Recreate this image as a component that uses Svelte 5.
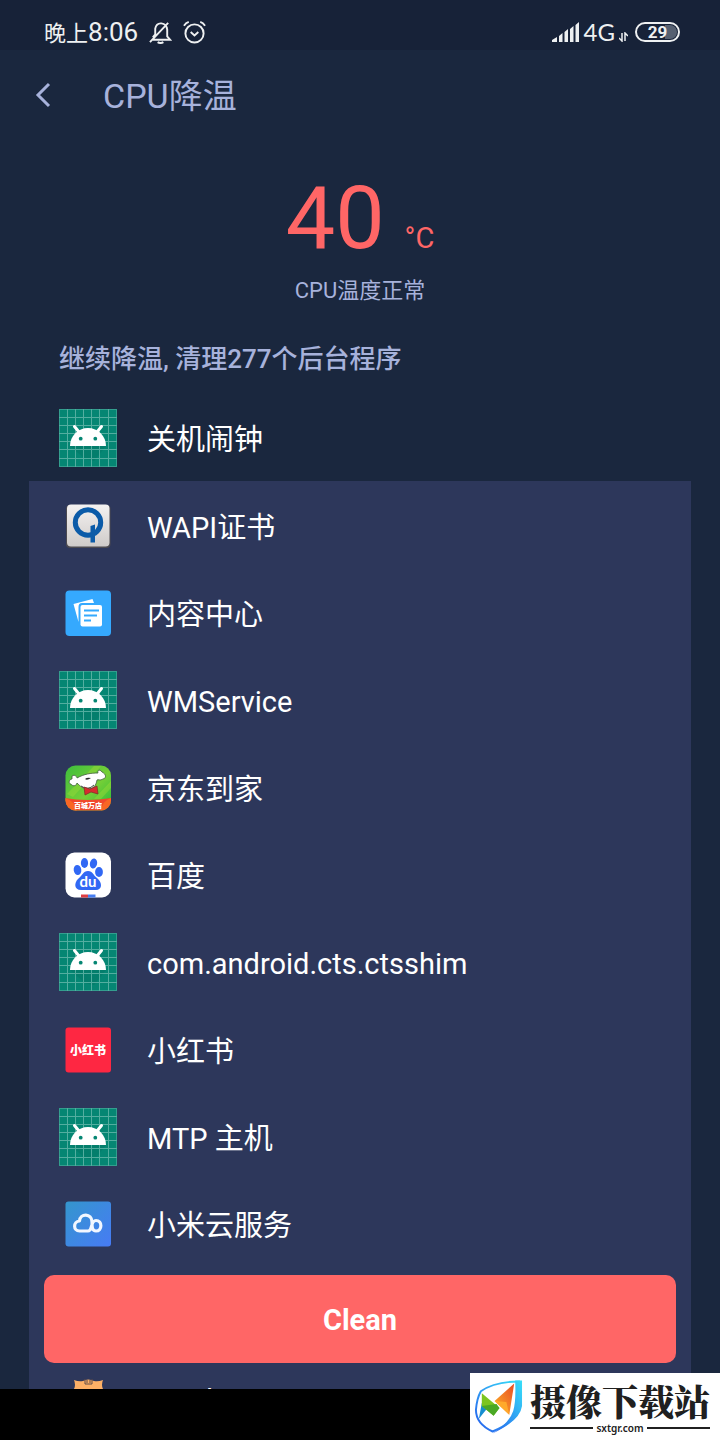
<script lang="ts">
  interface App {
    name: string;
    icon: string;
  }

  const title = 'CPU降温';
  const temperature = 40;
  const processCount = 277;
  const battery = 29;

  const apps: App[] = [
    { name: 'WAPI证书', icon: 'wapi' },
    { name: '内容中心', icon: 'content' },
    { name: 'WMService', icon: 'android' },
    { name: '京东到家', icon: 'jd' },
    { name: '百度', icon: 'baidu' },
    { name: 'com.android.cts.ctsshim', icon: 'android' },
    { name: '小红书', icon: 'red' },
    { name: 'MTP 主机', icon: 'android' },
    { name: '小米云服务', icon: 'cloud' },
  ];

  const gridLines = [8, 16, 24, 32, 40, 49];
</script>

{#snippet appIcon(kind: string)}
  <svg class="app-icon" viewBox="0 0 58 58" aria-hidden="true">
    {#if kind === 'android'}
      <rect width="58" height="58" fill="#058673" />
      <path d="M11 37H47L35 52L26 50Z" fill="#047565" opacity="0.5" />
      <g stroke="#6dbcaf" stroke-width="1" opacity="0.75">
        {#each gridLines as n}
          <path d="M{n + 0.5} 0V58M0 {n + 0.5}H58" />
        {/each}
        <path d="M0 .5H58M.5 0V58M57.5 0V58M0 57.5H58" opacity="0.6" />
      </g>
      <path d="M11 37C11 27 19 19 29 19S47 27 47 37Z" fill="#fff" />
      <path d="M15.5 17.5L20 23M42.5 17.5L38 23" stroke="#fff" stroke-width="3" stroke-linecap="round" />
      <circle cx="21.7" cy="29.7" r="1.9" fill="#058673" />
      <circle cx="36.3" cy="29.7" r="1.9" fill="#058673" />
    {:else if kind === 'wapi'}
      <defs>
        <linearGradient id="wapi-bg" x1="0" y1="0" x2="0" y2="1">
          <stop offset="0" stop-color="#f4f2f1" />
          <stop offset="1" stop-color="#cfcbc9" />
        </linearGradient>
      </defs>
      <rect x="7" y="8" width="44.5" height="43" rx="4" fill="#4c4a50" />
      <rect x="8" y="7.5" width="42.5" height="42" rx="4" fill="url(#wapi-bg)" />
      <circle cx="29" cy="25.5" r="12.7" fill="none" stroke="#0b5ba8" stroke-width="5" />
      <path d="M31.5 29L36 27.5V45.5H31.5Z" fill="#0b5ba8" />
    {:else if kind === 'content'}
      <rect x="6.5" y="6.5" width="45.5" height="45.5" rx="4" fill="#35a9fe" />
      <path d="M14.5 20L33.5 15L35 19H23Q19.5 19 19.5 23V38Z" fill="#fff" />
      <rect x="21.5" y="21" width="21.5" height="21.5" rx="2" fill="#fff" />
      <path d="M25 26.5H40M25 31.5H38M25 36.5H32" stroke="#35a9fe" stroke-width="2" />
    {:else if kind === 'jd'}
      <defs>
        <linearGradient id="jd-bg" x1="0" y1="0" x2="1" y2="1">
          <stop offset="0" stop-color="#3cbd3d" />
          <stop offset="0.55" stop-color="#76cf37" />
          <stop offset="1" stop-color="#20b93a" />
        </linearGradient>
        <clipPath id="jd-clip"><rect x="6.5" y="6.5" width="45.5" height="45" rx="10" /></clipPath>
      </defs>
      <g clip-path="url(#jd-clip)">
        <rect x="6" y="6" width="47" height="47" fill="url(#jd-bg)" />
        <path d="M8 35L35 7H42L14 38ZM35 40L52 22V29L42 40Z" fill="#a6db37" opacity="0.4" />
        <path d="M6 39Q28 43 52 39V53H6Z" fill="#f1482c" />
        <path d="M6 39Q16 42 18 52H6ZM52 39Q43 42 42 52H52Z" fill="#ff7b20" opacity="0.6" />
      </g>
      <path d="M13 17C16 15 18 18 18 19C25 15 32 14 39 14C38 11 41 10 43 13C47 15 48 19 44 20C41 22 39 20 38 21C37 27 34 30 29 30C24 30 21 27 18 24C17 28 13 27 12 25C9 25 10 20 13 20Z" fill="#fff" stroke="#425d40" stroke-width="0.8" />
      <path d="M26 20Q28 18 32 19Q28 22 26 20Z" fill="#272727" />
      <path d="M22 27Q29 32 35 26" fill="none" stroke="#424c42" />
      <path d="M25 28L31 30L38 27L39 35L32 33L26 36Z" fill="#d72b2e" stroke="#782b26" stroke-width="0.7" />
      <text class="jd-text" x="29" y="49" text-anchor="middle">百城万店</text>
    {:else if kind === 'baidu'}
      <rect x="6.5" y="6.5" width="45.5" height="45" rx="9" fill="#fff" />
      <g fill="#3168f4">
        <ellipse cx="18.5" cy="24" rx="3.8" ry="5" transform="rotate(-8 18.5 24)" />
        <ellipse cx="25.5" cy="17" rx="3.6" ry="5" />
        <ellipse cx="34.5" cy="17.5" rx="3.6" ry="5" transform="rotate(12 34.5 17.5)" />
        <ellipse cx="40" cy="26" rx="3.9" ry="5" />
        <path d="M29 25C34 25 34 29 38 32C44 37 43 44 37 44C33 44 25 44 22 44C15 44 15 37 19 33C23 30 24 25 29 25Z" />
      </g>
      <text class="du-text" x="29" y="41" text-anchor="middle">du</text>
      <path d="M22 48.5H29V51.5H22Z" fill="#df3e43" />
      <path d="M29 48.5H36.5V51.5H29Z" fill="#467df1" />
    {:else if kind === 'red'}
      <rect x="6.5" y="6.5" width="45.5" height="45" rx="3" fill="#fe2742" />
      <text class="red-text" x="29" y="34" text-anchor="middle">小红书</text>
    {:else if kind === 'cloud'}
      <defs>
        <linearGradient id="cloud-bg" x1="0" y1="0" x2="1" y2="1">
          <stop offset="0" stop-color="#3496cd" />
          <stop offset="1" stop-color="#477bf5" />
        </linearGradient>
      </defs>
      <rect x="6.5" y="6.5" width="45.5" height="45" rx="3" fill="url(#cloud-bg)" />
      <path d="M37 36C33 36 33 32 33 27C33 18 21 18 20.5 26C14 26.5 14 36 20.5 36H29C34 36 31 25.5 37 25.500C43.5 25.5 43.5 36 37 36Z" fill="none" stroke="#f2f7ff" stroke-width="3.2" stroke-linejoin="round" />
    {:else if kind === 'cat'}
      <path d="M15 11Q20 13 24 12Q29 9 35 12Q39 13 44 11Q42 16 44 20V48H15V20Q17 16 15 11Z" fill="#fdb066" />
      <path d="M26 10V15H33V10M28 11V14M31 11V14" fill="none" stroke="#614d48" />
    {/if}
  </svg>
{/snippet}

<div class="screen">
  <div class="status-bar">
    <div class="status-group">
      <span class="clock"><span class="period">晚上</span>8:06</span>
      <svg class="status-icon" viewBox="0 0 24 24" aria-label="静音">
        <path d="M4 19.5H22L19 16V9C18 1 8 0 6.5 8V14L4 17M9 22Q12 24 15 22M1 22L20 2" />
      </svg>
      <svg class="status-icon" viewBox="0 0 24 24" aria-label="闹钟">
        <circle cx="12" cy="13" r="9.5" />
        <path d="M8 11.5L12 15L16 11.5M1 5Q3 2 6 1M18 1Q21 2 23 5" />
      </svg>
    </div>
    <div class="status-group signal-group">
      <svg class="signal" viewBox="0 0 28 20" aria-hidden="true">
        <path d="M0 20V18L5 15V20ZM7 20V14L10.5 11V20ZM12.5 20V10L16 7V20ZM18 20V7L21.5 4V20ZM23.5 20V3L27 0V20Z" fill="#eef0f1" />
      </svg>
      <span class="network">4G</span>
      <svg class="data" viewBox="0 0 9 10" aria-hidden="true">
        <path d="M3 1V9L0 6M6 9V1L9 4" fill="none" stroke="#eef0f1" stroke-width="1.5" />
      </svg>
      <span class="battery">{battery}</span>
    </div>
  </div>

  <main>
    <header class="toolbar">
      <button class="back" aria-label="返回">
        <svg viewBox="0 0 16 26" aria-hidden="true">
          <path d="M14 2L3 13L14 24" fill="none" stroke="#a7b2db" stroke-width="3" />
        </svg>
      </button>
      <h1>{title}</h1>
    </header>

    <section class="temperature">
      <p class="reading">{temperature}<span class="unit">°C</span></p>
      <p class="state">CPU温度正常</p>
    </section>

    <h2>继续降温, 清理{processCount}个后台程序</h2>

    <div class="app-row first-row">
      {@render appIcon('android')}
      <span class="app-name">关机闹钟</span>
    </div>

    <section class="panel">
      <ul>
        {#each apps as app}
          <li class="app-row">
            {@render appIcon(app.icon)}
            <span class="app-name">{app.name}</span>
          </li>
        {/each}
      </ul>
      <button class="clean">Clean</button>
      <div class="app-row next-row">
        {@render appIcon('cat')}
        <span class="app-name">CatchLog</span>
      </div>
    </section>
  </main>

  <div class="nav-bar"></div>

  <aside class="site-badge">
    <svg class="shield" viewBox="0 0 52 58" aria-hidden="true">
      <defs>
        <linearGradient id="shield-line" x1="1" y1="0" x2="0" y2="1">
          <stop offset="0" stop-color="#38dff8" />
          <stop offset="1" stop-color="#275eed" />
        </linearGradient>
        <linearGradient id="wing" x1="0" y1="1" x2="1" y2="0">
          <stop offset="0" stop-color="#ffb527" />
          <stop offset="1" stop-color="#e84c24" />
        </linearGradient>
      </defs>
      <path d="M8 13Q22 3 47 3V30Q45 43 20 54Q3 46 3 32Q4 20 8 13Z" fill="#fff" stroke="url(#shield-line)" stroke-width="2" />
      <path d="M43 2H50V28Q48 43 20 56Q37 45 41 33Q44 23 43 2Z" fill="url(#shield-line)" />
      <path d="M9 25L14 31L6 41Z" fill="#168ed0" />
      <path d="M9 15L27 30L21 38L9 28Z" fill="#7cc520" />
      <path d="M9 28L24 26L27 30L21 38Z" fill="#4aa825" />
      <path d="M22 23L42 5L37 37Z" fill="url(#wing)" />
      <path d="M22 23L34 24L37 37Z" fill="#ffa92b" />
    </svg>
    <div class="site-text">
      <strong>摄像下载站</strong>
      <span class="site-url">sxtgr.com</span>
    </div>
  </aside>
</div>

<style>
  :global(body) {
    margin: 0;
    background: #000;
  }

  .screen {
    position: relative;
    display: flex;
    flex-direction: column;
    height: 100vh;
    overflow: hidden;
    background: #1a273e;
    color: #fff;
    font-family: Roboto, "Noto Sans CJK SC", sans-serif;
  }

  h1,
  h2,
  p,
  ul {
    margin: 0;
    padding: 0;
    font-weight: 400;
  }

  button {
    border: 0;
    padding: 0;
    font: inherit;
    cursor: pointer;
  }

  .status-bar {
    display: flex;
    flex: none;
    align-items: center;
    justify-content: space-between;
    box-sizing: border-box;
    height: 50px;
    padding: 14px 40px 0 44px;
    background: #172238;
    color: #eef0f1;
    font-size: 26px;
    line-height: 36px;
  }

  .status-group {
    display: flex;
    align-items: center;
    gap: 11px;
  }

  .clock {
    padding-top: 2px;
  }

  .period {
    font-size: 22px;
  }

  .status-icon {
    width: 23px;
    height: 23px;
    fill: none;
    stroke: #eef0f1;
    stroke-width: 2;
  }

  .signal-group {
    gap: 4px;
  }

  .signal {
    width: 28px;
    height: 20px;
  }

  .network {
    font-family: Lato, sans-serif;
    font-size: 24px;
  }

  .data {
    align-self: flex-end;
    width: 9px;
    height: 10px;
    margin-bottom: 8px;
  }

  .battery {
    box-sizing: border-box;
    width: 45px;
    height: 20px;
    margin-left: 3px;
    padding: 1px;
    border: 2px solid #eef0f1;
    border-radius: 10px;
    background: linear-gradient(90deg, transparent 70%, #566071 70%) content-box;
    font-size: 17px;
    font-weight: 700;
    line-height: 14px;
    text-align: center;
  }

  main {
    flex: 1;
    min-height: 0;
    overflow: hidden;
  }

  .toolbar {
    display: flex;
    align-items: center;
    height: 90px;
    padding-left: 35px;
  }

  .back {
    display: flex;
    width: 68px;
    background: none;
  }

  .back svg {
    width: 16px;
    height: 26px;
  }

  h1 {
    padding-top: 2px;
    color: #a7b2db;
    font-size: 34px;
    line-height: 48px;
  }

  .temperature {
    height: 193px;
    text-align: center;
  }

  .reading {
    height: 106px;
    padding-top: 25px;
    color: #ff6666;
    font-size: 88px;
    line-height: 106px;
  }

  .unit {
    margin-left: 20px;
    font-size: 29px;
  }

  .state {
    color: #a7b2db;
    font-size: 22px;
    line-height: 40px;
  }

  h2 {
    padding-left: 59px;
    color: #a7b2db;
    font-size: 26px;
    font-weight: 500;
    line-height: 52px;
  }

  .app-row {
    display: flex;
    align-items: center;
    gap: 30px;
    padding-left: 30px;
    font-size: 29px;
    line-height: 40px;
  }

  .app-name {
    padding-top: 4px;
  }

  .first-row {
    height: 86px;
    padding: 10px 0 0 59px;
  }

  .next-row {
    height: 70px;
  }

  .app-icon {
    flex: none;
    width: 58px;
    height: 58px;
  }

  .panel {
    margin: 0 29px;
    background: #2d375b;
  }

  ul {
    display: grid;
    grid-auto-rows: 1fr;
    height: 786px;
    padding-top: 1px;
    list-style: none;
  }

  .clean {
    display: block;
    width: calc(100% - 30px);
    height: 88px;
    margin: 7px 15px 0;
    padding-top: 2px;
    border-radius: 10px;
    background: #ff6666;
    color: #fff;
    font-size: 29px;
    font-weight: 700;
  }

  .nav-bar {
    flex: none;
    height: 51px;
    background: #000;
  }

  .site-badge {
    position: absolute;
    right: 0;
    bottom: 0;
    display: flex;
    align-items: center;
    gap: 6px;
    box-sizing: border-box;
    width: 250px;
    height: 67px;
    padding: 0 10px 0 3px;
    background: #fff;
    color: #202020;
  }

  .shield {
    width: 52px;
    height: 58px;
  }

  .site-text {
    flex: 1;
    white-space: nowrap;
  }

  .site-text strong {
    display: block;
    font-family: "Noto Serif CJK SC", "Noto Sans CJK SC", serif;
    font-size: 36px;
    font-weight: 900;
    line-height: 42px;
  }

  .site-url {
    display: flex;
    align-items: center;
    gap: 3px;
    font-family: "Noto Sans", sans-serif;
    font-size: 10px;
    font-weight: 600;
    line-height: 12px;
  }

  .site-url::before,
  .site-url::after {
    content: "";
    flex: 1;
    height: 2px;
    background: #202020;
  }

  .jd-text,
  .du-text,
  .red-text {
    fill: #fff;
    font-family: "Noto Sans CJK SC", sans-serif;
    font-size: 7px;
    font-weight: 900;
  }

  .du-text {
    font-family: Lato, sans-serif;
    font-size: 15px;
    font-weight: 700;
  }

  .red-text {
    font-size: 12px;
  }
</style>
